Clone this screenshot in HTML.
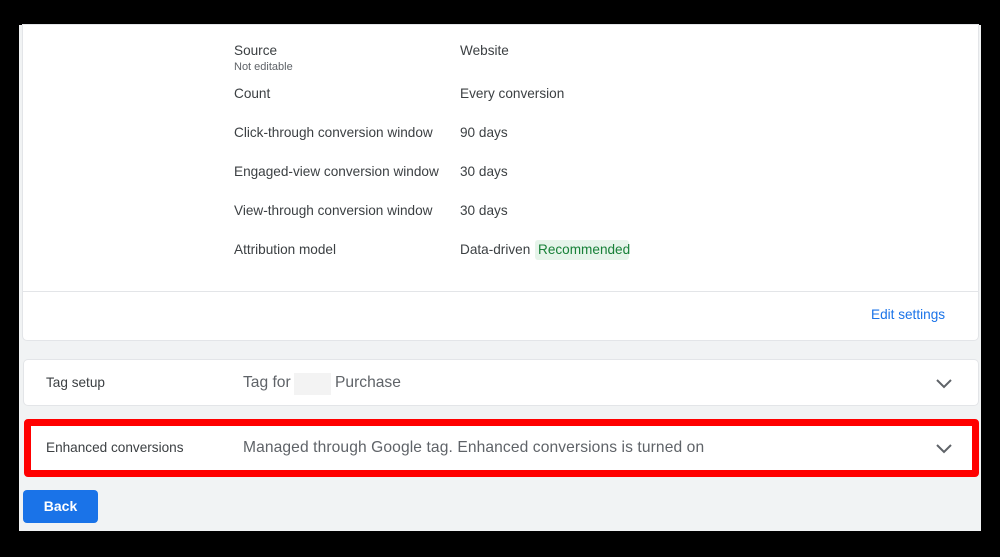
<!DOCTYPE html>
<html><head><style>
*{margin:0;padding:0;box-sizing:border-box}
body{width:1000px;height:557px;background:#000;position:relative;overflow:hidden;font-family:"Liberation Sans",Arial,sans-serif;color:#3c4043}
.main{position:absolute;left:19px;top:25px;width:962px;height:506px;background:#f1f3f4}
.card{position:absolute;background:#fff;border-radius:4px;box-shadow:0 0 0 1px #e3e5e8}
.t{position:absolute;font-size:13.6px;white-space:nowrap}
.g{color:#5f6368}
.chev{position:absolute;width:18px;height:12px}
</style></head><body>
<div class="main">
 <div class="card" style="left:4px;top:0;width:955px;height:315px;border-radius:0 0 4px 4px"></div>
 <div style="position:absolute;left:4px;top:266px;width:955px;height:1px;background:#e3e5e8"></div>
</div>
<div class="t" style="left:234px;top:43px">Source</div>
<div class="t g" style="left:234px;top:61px;font-size:11px">Not editable</div>
<div class="t" style="left:460px;top:43px">Website</div>
<div class="t" style="left:234px;top:86px">Count</div>
<div class="t" style="left:460px;top:86px">Every conversion</div>
<div class="t" style="left:234px;top:125px">Click-through conversion window</div>
<div class="t" style="left:460px;top:125px">90 days</div>
<div class="t" style="left:234px;top:164px">Engaged-view conversion window</div>
<div class="t" style="left:460px;top:164px">30 days</div>
<div class="t" style="left:234px;top:203px">View-through conversion window</div>
<div class="t" style="left:460px;top:203px">30 days</div>
<div class="t" style="left:234px;top:242px">Attribution model</div>
<div class="t" style="left:460px;top:242px">Data-driven</div>
<div style="position:absolute;left:535px;top:240px;width:94px;height:20px;background:#e6f4ea;border-radius:3px"></div>
<div class="t" style="left:538px;top:242px;color:#188038">Recommended</div>
<div class="t" style="left:871px;top:307px;color:#1a73e8">Edit settings</div>

<div class="card" style="left:24px;top:360px;width:954px;height:45px"></div>
<div class="t" style="left:46px;top:375px">Tag setup</div>
<div class="t g" style="left:243px;top:374px;font-size:15.6px">Tag for</div>
<div style="position:absolute;left:294px;top:373px;width:37px;height:22px;background:#f3f3f3"></div>
<div class="t g" style="left:335px;top:374px;font-size:15.6px">Purchase</div>
<svg class="chev" style="left:935px;top:377px" viewBox="0 0 18 12"><path d="M2 3l7 7 7-7" fill="none" stroke="#5f6368" stroke-width="2"/></svg>

<div style="position:absolute;left:24px;top:419px;width:955px;height:58px;border:7px solid #ff0000;border-radius:4px;background:#fff"></div>
<div class="t" style="left:46px;top:440px">Enhanced conversions</div>
<div class="t g" style="left:243px;top:439px;font-size:15.6px;letter-spacing:0.1px">Managed through Google tag. Enhanced conversions is turned on</div>
<svg class="chev" style="left:935px;top:442px" viewBox="0 0 18 12"><path d="M2 3l7 7 7-7" fill="none" stroke="#5f6368" stroke-width="2"/></svg>

<div style="position:absolute;left:23px;top:490px;width:75px;height:33px;background:#1a73e8;border-radius:4px;color:#fff;font-size:14px;font-weight:bold;text-align:center;line-height:33px">Back</div>
</body></html>
